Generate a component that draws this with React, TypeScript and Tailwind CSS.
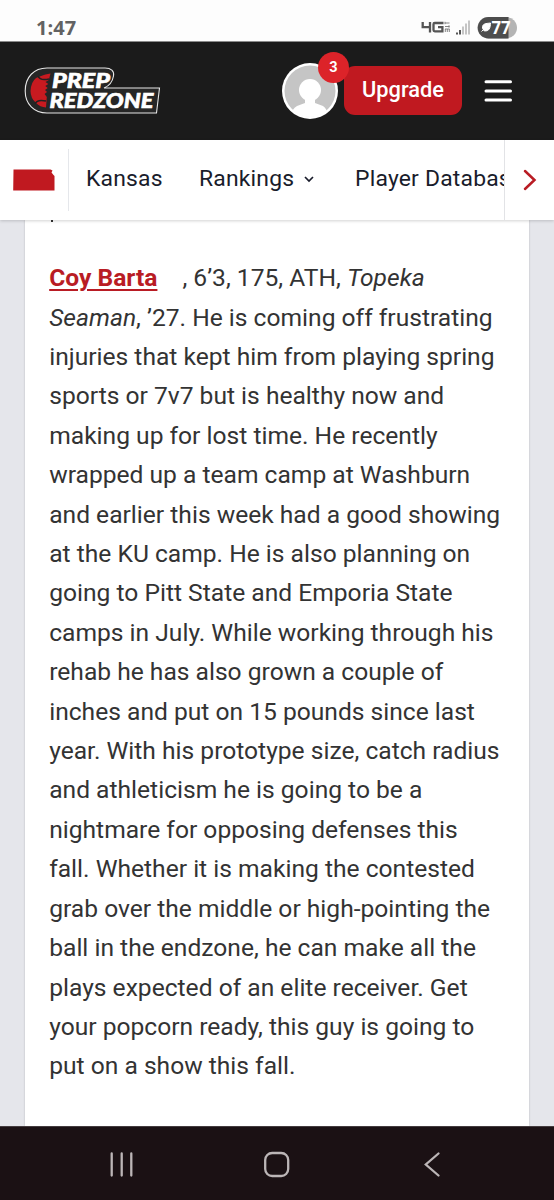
import React from "react";

const lines = [
  "injuries that kept him from playing spring",
  "sports or 7v7 but is healthy now and",
  "making up for lost time. He recently",
  "wrapped up a team camp at Washburn",
  "and earlier this week had a good showing",
  "at the KU camp. He is also planning on",
  "going to Pitt State and Emporia State",
  "camps in July. While working through his",
  "rehab he has also grown a couple of",
  "inches and put on 15 pounds since last",
  "year. With his prototype size, catch radius",
  "and athleticism he is going to be a",
  "nightmare for opposing defenses this",
  "fall. Whether it is making the contested",
  "grab over the middle or high-pointing the",
  "ball in the endzone, he can make all the",
  "plays expected of an elite receiver. Get",
  "your popcorn ready, this guy is going to",
  "put on a show this fall.",
];

function StatusBar() {
  return (
    <div className="flex h-[42px] shrink-0 items-start justify-between border-b border-[#8b8b8b] bg-[#fdfdfd] pl-[36px] pr-[37px]">
      <span className="pt-[15px] font-['Open_Sans',sans-serif] text-[20px] font-bold leading-[26px] tracking-[0.1px] text-[#626262]">1:47</span>
      <svg className="mt-[15px]" width="96" height="25" viewBox="0 0 96 25">
        <g fill="none" stroke="#555" strokeWidth="2.3">
          <path d="M1.7 7v5.200h8.200M9 7v10.500" />
          <path d="M22.500 8H13.800q-1.300 0-1.300 1.300v5.700q0 1.300 1.300 1.300h7.600v-4.200H17" />
        </g>
        <path d="M24 8h4.500M24 6.800v2.400M24 11.500h4.500M28 10.300v2.400M24.300 14v3M26.300 14v3M28.300 14v3M24 14h4.500" fill="none" stroke="#777" strokeWidth="0.9" />
        <path d="M35 17.500h2v2h-2zM38 15h2v4.500h-2z" fill="#555" />
        <path d="M41 11.500h2v8h-2zM44 8.500h2v11h-2zM47 5.500h2v14h-2z" fill="#c5c5c5" />
        <rect x="56.500" y="2" width="39.500" height="21.500" rx="10.750" fill="#b4b4b4" />
        <path d="M67.500 2H87.500v21.500H67.500a10.750 10.750 0 0 1 0-21.500z" fill="#4d4d4d" />
        <path d="M60.500 16.500l3-3M61.500 13c-.4-4.500 3.500-4.500 8-5-.2 4.500-1 8.800-6.500 7.800z" fill="#fff" stroke="#fff" strokeWidth="1" />
        <text x="70.500" y="19" fontFamily="Open Sans" fontWeight="700" fontSize="17.500" textLength="19" lengthAdjust="spacingAndGlyphs" fill="#fff">77</text>
      </svg>
    </div>
  );
}

function Logo() {
  return (
    <svg width="138" height="50" viewBox="24 66 138 50" aria-label="Prep Redzone">
      <path d="M47 68H105C111 68 114.500 71 113.500 76C112.500 82 109 86 104 88H159.500L156.500 113H47C34 113 25.200 104 25.200 91C25.200 77 34 68 47 68Z" fill="#262626" stroke="#e5e5e5" strokeWidth="1.100" />
      <path d="M41 76Q45 74 50.500 73.500L48.800 80L45.500 82L48.300 84L45.300 86L47.700 88L45 90L47 92L44.600 94L46.800 97L46 107.500Q40 107 36 103Q30.500 98 30.500 91Q31 82 36 78Z" fill="#c71a20" />
      <path d="M38 76Q40 81 49 79M35 104Q37 99 46 101" fill="none" stroke="#222" strokeWidth="1.600" />
      <g fontFamily="Lato" fontWeight="900" fontStyle="italic" fill="#fff" stroke="#fff" strokeWidth="0.600">
        <text x="52" y="87.500" fontSize="20" textLength="58" lengthAdjust="spacingAndGlyphs">PREP</text>
        <text x="49.500" y="107.700" fontSize="20.500" textLength="104" lengthAdjust="spacingAndGlyphs">REDZONE</text>
      </g>
    </svg>
  );
}

function Header() {
  return (
    <header className="flex h-[98px] shrink-0 items-center bg-[#1b1b1b] pl-[24px]">
      <Logo />
      <div className="relative ml-[120px] h-14 w-14">
        <svg width="56" height="56" viewBox="0 0 56 56">
          <defs><clipPath id="face"><circle cx="28" cy="28" r="26" /></clipPath></defs>
          <circle cx="28" cy="28" r="28" fill="#fff" />
          <circle cx="28" cy="28" r="25.500" fill="#c5c5c5" />
          <g clipPath="url(#face)" fill="#fff">
            <circle cx="28" cy="27" r="11" />
            <path d="M23 34h10v6l8 3q5 3 5 13H9q0-10 6-13l8-3z" />
          </g>
        </svg>
        <span className="absolute left-[36px] top-[-11px] flex h-[31px] w-[31px] items-center justify-center rounded-full bg-[#dc2329] font-[Roboto,sans-serif] text-[14.500px] font-bold text-white">3</span>
      </div>
      <button className="mb-[1px] ml-[6px] h-[49px] w-[118px] rounded-[11px] bg-[#c01920] font-[Roboto,sans-serif] text-[21.800px] font-medium text-white">Upgrade</button>
      <svg className="mb-[1px] ml-[21px]" width="30" height="24" viewBox="0 0 30 24">
        <path d="M3 2.700h24.500M3 11.900h24.500M3 21h24.500" stroke="#fff" strokeWidth="3" strokeLinecap="round" />
      </svg>
    </header>
  );
}

function Nav() {
  return (
    <nav className="z-10 flex h-[79.500px] shrink-0 bg-white font-[Roboto,sans-serif] text-[22.900px] leading-[78px] tracking-[0.200px] text-[#191c2b] shadow-[0_1px_3px_rgba(0,0,0,0.18)]">
      <div className="my-[9px] flex w-[69px] items-center border-r border-[#e5e7eb] pl-[13px]">
        <svg width="42" height="22" viewBox="0 0 42 22"><path d="M.5.5H37.500L39.500 1.500L38.500 3.500L40.500 6L41.500 7V21.500H.200Z" fill="#c01920" /></svg>
      </div>
      <div className="flex w-[435px] overflow-hidden whitespace-nowrap">
        <span className="ml-[17px] w-[113px] shrink-0">Kansas</span>
        <span className="w-[105px] shrink-0">Rankings</span>
        <svg className="mt-[35px] mr-[41px] shrink-0" width="10" height="8" viewBox="0 0 10 8"><path d="M1 2l4 4 4-4" fill="none" stroke="#191c2b" strokeWidth="1.700" /></svg>
        <span className="shrink-0">Player Database</span>
      </div>
      <div className="flex w-[50px] items-center justify-center border-l border-[#e2e3e6]">
        <svg width="14" height="22" viewBox="0 0 14 22"><path d="M2 2l9.500 9L2 20" fill="none" stroke="#b91c24" strokeWidth="2.500" strokeLinecap="round" /></svg>
      </div>
    </nav>
  );
}

export default function App() {
  return (
    <div className="flex h-[1200px] w-[554px] flex-col overflow-hidden bg-[#e5e6eb]">
      <StatusBar />
      <Header />
      <Nav />
      <main className="ml-[24.500px] mr-[25px] min-h-0 flex-1 overflow-hidden bg-white pl-[24.700px] font-[Roboto,sans-serif] text-[24.600px] leading-[39.400px] text-[#333] shadow-[0_0_2px_rgba(0,0,0,0.2)]">
        <div className="ml-[2px] h-[38.700px]">
          <div className="h-[2px] w-[2px] bg-[#333]" />
        </div>
        <p className="whitespace-nowrap">
          <a className="mr-[25px] font-bold text-[#b91c24] underline decoration-[2px] underline-offset-[3px]">Coy Barta</a>, 6’3, 175, ATH, <em>Topeka</em>
          <br />
          <em>Seaman</em>, ’27. He is coming off frustrating
          {lines.map((line) => (
            <React.Fragment key={line}><br />{line}</React.Fragment>
          ))}
        </p>
      </main>
      <footer className="h-[74px] shrink-0 border-t border-[#443c3f] bg-[#1b1114] pt-[23.500px]">
        <svg width="554" height="28" viewBox="0 0 554 28" fill="none" stroke="#bcb6b7" strokeWidth="2.300" strokeLinecap="round">
          <path d="M111.700 2.500v22M121.700 2.500v22M131.300 2.500v22" />
          <rect x="265.200" y="2" width="23" height="23" rx="7" />
          <path d="M438.500 2.500L425.800 13.500L438.500 24.500" />
        </svg>
      </footer>
    </div>
  );
}
